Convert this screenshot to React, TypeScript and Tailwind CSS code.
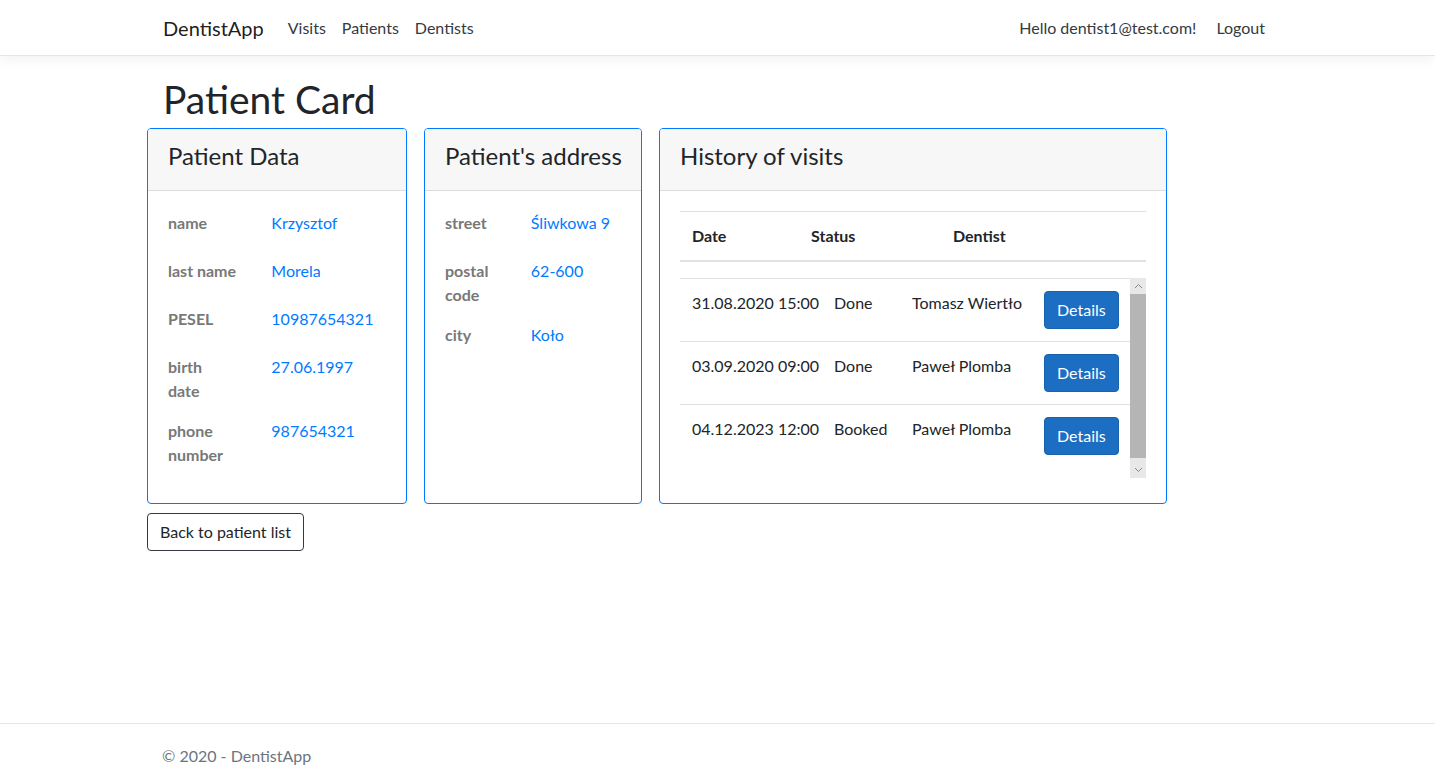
import React from "react";

type Field = { label: string; value: string };

// labels keep the same line breaks as the original layout
const patientData: Field[] = [
  { label: "name", value: "Krzysztof" },
  { label: "last name", value: "Morela" },
  { label: "PESEL", value: "10987654321" },
  { label: "birth\ndate", value: "27.06.1997" },
  { label: "phone\nnumber", value: "987654321" },
];

const address: Field[] = [
  { label: "street", value: "Śliwkowa 9" },
  { label: "postal\ncode", value: "62-600" },
  { label: "city", value: "Koło" },
];

const visits = [
  { date: "31.08.2020 15:00", status: "Done", dentist: "Tomasz Wiertło" },
  { date: "03.09.2020 09:00", status: "Done", dentist: "Paweł Plomba" },
  { date: "04.12.2023 12:00", status: "Booked", dentist: "Paweł Plomba" },
];

function CardHeader({ title }: { title: string }) {
  return (
    <div className="bg-[#f7f7f7] border-b border-[#dcdcdc] px-5 pt-3 pb-5 rounded-t-[3px]">
      <h3 className="text-[24px] leading-[29px] whitespace-nowrap text-[#212529]">{title}</h3>
    </div>
  );
}

function FieldList({ fields }: { fields: Field[] }) {
  return (
    <div className="px-5 pt-5 pb-5">
      {fields.map(f => (
        <div key={f.label} className="flex -mx-[15px] mb-4">
          <div className="w-5/12 px-[15px] font-bold text-[#787878] whitespace-pre-line">{f.label}</div>
          <div className="w-7/12 px-[15px] text-[#007bff] pb-2">{f.value}</div>
        </div>
      ))}
    </div>
  );
}

export default function App() {
  return (
    <div
      className="min-h-screen flex flex-col bg-white text-[16px] leading-6 text-[#212529]"
      style={{ fontFamily: 'Lato, "Open Sans", sans-serif' }}
    >
      <nav className="h-[56px] border-b border-[#e5e5e5] shadow-[0_4px_12px_rgba(0,0,0,0.05)] mb-4">
        <div className="w-[1141px] mx-auto px-[15px] h-full flex items-center">
          <span className="text-[20px] text-[#000000e6] mr-4 ml-px">DentistApp</span>
          <a className="px-2 text-[#343a40] text-[16px]">Visits</a>
          <a className="px-2 text-[#343a40] text-[16px]">Patients</a>
          <a className="px-2 text-[#343a40] text-[16px]">Dentists</a>
          <div className="ml-auto flex items-center">
            <span className="px-2 text-[#343a40] text-[16px]">Hello dentist1@test.com!</span>
            <a className="px-2 ml-1 text-[#343a40] text-[16px]">Logout</a>
          </div>
        </div>
      </nav>

      <main className="w-[1141px] mx-auto flex-1">
        <h1 className="px-[16px] pt-[3px] text-[39px] leading-[48px] mb-[5px] font-normal">Patient Card</h1>

        <div className="flex gap-[17px] items-stretch">
          <div className="w-[260px] border border-[#007bff] rounded">
            <CardHeader title="Patient Data" />
            <FieldList fields={patientData} />
          </div>

          <div className="w-[218px] border border-[#007bff] rounded">
            <CardHeader title="Patient's address" />
            <FieldList fields={address} />
          </div>

          <div className="w-[508px] border border-[#007bff] rounded">
            <CardHeader title="History of visits" />
            <div className="p-5">
              <div className="border-t border-[#dee2e6] border-b-2 border-b-[#dee2e6] flex font-bold mb-4">
                <div className="w-[119px] p-3">Date</div>
                <div className="w-[142px] p-3">Status</div>
                <div className="w-[142px] p-3">Dentist</div>
              </div>
              <div className="flex h-[200px]">
                <div className="w-[450px]">
                  {visits.map((v, i) => (
                    <div key={i} className="flex border-t border-[#dee2e6] text-[#212529]">
                      <div className="w-[142px] p-3 whitespace-nowrap">{v.date}</div>
                      <div className="w-[78px] p-3">{v.status}</div>
                      <div className="w-[132px] p-3 whitespace-nowrap">{v.dentist}</div>
                      <div className="w-[98px] p-3">
                        <button className="bg-[#1b6ec2] border border-[#1861ac] text-white rounded px-3 h-[38px] leading-6">
                          Details
                        </button>
                      </div>
                    </div>
                  ))}
                </div>
                <div className="w-[16px] flex flex-col bg-[#e8e8e8]">
                  <div className="h-[16px] flex items-center justify-center text-[#8a8a8a]">
                    <svg width="9" height="6" viewBox="0 0 9 6" fill="none">
                      <path d="M1 5 L4.5 1.5 L8 5" stroke="currentColor" strokeWidth="1" />
                    </svg>
                  </div>
                  <div className="flex-1 bg-[#b5b5b5] mb-1"></div>
                  <div className="h-[16px] flex items-center justify-center text-[#8a8a8a]">
                    <svg width="9" height="6" viewBox="0 0 9 6" fill="none">
                      <path d="M1 1 L4.5 4.5 L8 1" stroke="currentColor" strokeWidth="1" />
                    </svg>
                  </div>
                </div>
              </div>
            </div>
          </div>
        </div>

        <button className="mt-[9px] border border-[#343a40] rounded px-3 h-[38px] text-[#212529]">
          Back to patient list
        </button>
      </main>

      <footer className="border-t border-[#e5e5e5] h-[58px] mt-auto">
        <div className="w-[1141px] mx-auto px-[15px] pt-5 text-[#6c757d] text-[16px]">© 2020 - DentistApp</div>
      </footer>
    </div>
  );
}
